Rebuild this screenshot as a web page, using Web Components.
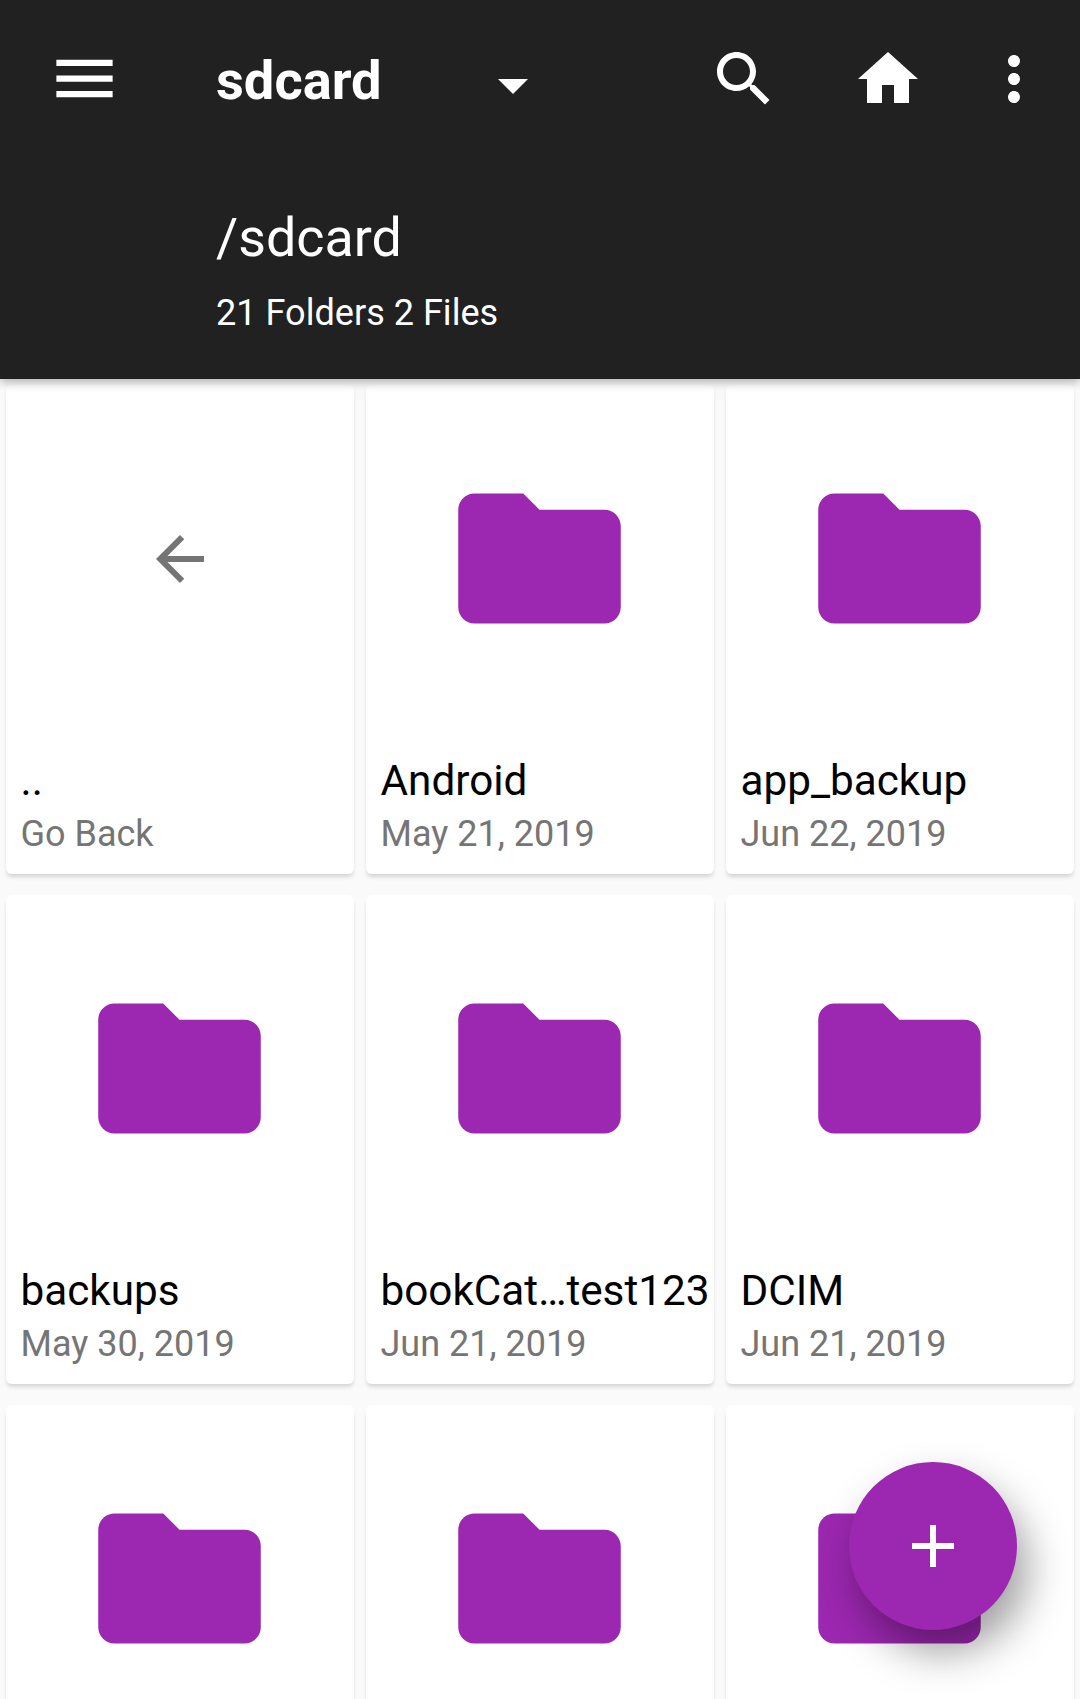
<!DOCTYPE html>
<html>
<head>
<meta charset="utf-8">
<title>sdcard</title>
<style>
  html, body { margin: 0; height: 1699px; overflow: hidden; background: #fafafa; }
  body { position: relative; font-family: Roboto, "Liberation Sans", sans-serif; }
</style>
</head>
<body>
<app-header folder="sdcard" path="/sdcard" summary="21 Folders 2 Files"></app-header>
<file-grid>
  <file-card back name=".." info="Go Back"></file-card>
  <file-card name="Android" info="May 21, 2019"></file-card>
  <file-card name="app_backup" info="Jun 22, 2019"></file-card>
  <file-card name="backups" info="May 30, 2019"></file-card>
  <file-card name="bookCat…test123" info="Jun 21, 2019"></file-card>
  <file-card name="DCIM" info="Jun 21, 2019"></file-card>
  <file-card></file-card>
  <file-card></file-card>
  <file-card></file-card>
</file-grid>
<add-fab></add-fab>

<script>
  const ICONS = {
    menu: 'M3 18h18v-2H3v2zm0-5h18v-2H3v2zm0-7v2h18V6H3z',
    drop: 'M7 10l5 5 5-5z',
    search: 'M15.5 14h-.79l-.28-.27C15.41 12.59 16 11.11 16 9.5 16 5.91 13.09 3 9.5 3S3 5.91 3 9.5 5.91 16 9.5 16c1.61 0 3.09-.59 4.23-1.57l.27.28v.79l5 4.99L20.49 19l-4.99-5zm-6 0C7.01 14 5 11.99 5 9.5S7.01 5 9.5 5 14 7.01 14 9.5 11.99 14 9.5 14z',
    home: 'M10 20v-6h4v6h5v-8h3L12 3 2 12h3v8z',
    more: 'M12 8c1.1 0 2-.9 2-2s-.9-2-2-2-2 .9-2 2 .9 2 2 2zm0 2c-1.1 0-2 .9-2 2s.9 2 2 2 2-.9 2-2-.9-2-2-2zm0 6c-1.1 0-2 .9-2 2s.9 2 2 2 2-.9 2-2-.9-2-2-2z',
    folder: 'M10 4H4c-1.1 0-2 .9-2 2v12c0 1.1.9 2 2 2h16c1.1 0 2-.9 2-2V8c0-1.1-.9-2-2-2h-8l-2-2z',
    back: 'M20 11H7.83l5.59-5.59L12 4l-8 8 8 8 1.41-1.41L7.83 13H20v-2z',
    plus: 'M19 13h-6v6h-2v-6H5v-2h6V5h2v6h6v2z'
  };
  const icon = (name, size, fill) =>
    `<svg width="${size}" height="${size}" viewBox="0 0 24 24" fill="${fill}" style="display:block;flex:none"><path d="${ICONS[name]}"/></svg>`;

  class AppHeader extends HTMLElement {
    constructor(){
      super();
      this.shadow = this.attachShadow({mode: 'open'});
    }
    connectedCallback(){
      this.shadow.innerHTML = `
        <style>
          :host {
            display: block;
            position: relative;
            z-index: 2;
            height: 379px;
            box-sizing: border-box;
            background: #212121;
            color: #fff;
            box-shadow: 0 3px 10px rgba(0,0,0,.3);
            overflow: hidden;
          }
          .bar { display: flex; align-items: flex-start; height: 206px; }
          .menu { margin: 41px 0 0 47px; width: 75px; }
          .folder { margin: 47px 0 0 94px; width: 261px; font-size: 54.25px; font-weight: 700; line-height: 68px; }
          .drop { margin: 49px 0 0 0; }
          .search { margin: 43px 0 0 159px; }
          .home { margin: 43px 0 0 72px; }
          .more { margin: 43px 0 0 54px; }
          .path { margin-left: 216px; font-size: 53.8px; line-height: 64px; }
          .summary { margin: 21px 0 0 216px; font-size: 36.1px; line-height: 44px; }
        </style>
        <div class="bar">
          <div class="menu">${icon('menu', 75, '#fff')}</div>
          <div class="folder">${this.getAttribute('folder')}</div>
          <div class="drop">${icon('drop', 72, '#fff')}</div>
          <div class="search">${icon('search', 72, '#fff')}</div>
          <div class="home">${icon('home', 72, '#fff')}</div>
          <div class="more">${icon('more', 72, '#fff')}</div>
        </div>
        <div class="path">${this.getAttribute('path')}</div>
        <div class="summary">${this.getAttribute('summary')}</div>
      `;
    }
  }

  class FileGrid extends HTMLElement {
    constructor(){
      super();
      this.shadow = this.attachShadow({mode: 'open'});
      this.shadow.innerHTML = `
        <style>
          :host {
            display: grid;
            grid-template-columns: repeat(3, 348px);
            grid-auto-rows: 489.5px;
            column-gap: 12px;
            row-gap: 20.5px;
            padding: 5.5px 6px 0;
            height: 1320px;
            box-sizing: border-box;
            overflow: hidden;
          }
        </style>
        <slot></slot>
      `;
    }
  }

  class FileCard extends HTMLElement {
    constructor(){
      super();
      this.shadow = this.attachShadow({mode: 'open'});
    }
    connectedCallback(){
      const back = this.hasAttribute('back');
      const graphic = back
        ? icon('back', 72, '#757575')
        : icon('folder', 195, '#9c27b0');
      this.shadow.innerHTML = `
        <style>
          :host {
            display: block;
            box-sizing: border-box;
            background: #fff;
            border-radius: 6px;
            box-shadow: 0 4px 4px -1px rgba(0,0,0,.15);
            padding: 0 0 0 14.5px;
          }
          .graphic {
            display: flex;
            align-items: center;
            justify-content: center;
            height: 195px;
            margin: 0 0 0 -15.5px;
            padding-top: 76px;
          }
          .graphic.back { margin-left: -14.5px; padding-top: 77px; height: 194px; }
          .name { margin-top: 99px; font-size: 42.25px; line-height: 52px; color: #000; white-space: nowrap; }
          .info { margin-top: 5px; font-size: 36px; line-height: 44px; color: #757575; white-space: nowrap; }
        </style>
        <div class="graphic ${back ? 'back' : ''}">${graphic}</div>
        <div class="name">${this.getAttribute('name') || ''}</div>
        <div class="info">${this.getAttribute('info') || ''}</div>
      `;
    }
  }

  class AddFab extends HTMLElement {
    constructor(){
      super();
      this.shadow = this.attachShadow({mode: 'open'});
      this.shadow.innerHTML = `
        <style>
          :host {
            position: absolute;
            right: 63px;
            bottom: 69px;
            z-index: 3;
            width: 168px;
            height: 168px;
            border-radius: 50%;
            background: #9c27b0;
            box-shadow: 10px 22px 42px rgba(0,0,0,.38);
            display: flex;
            align-items: center;
            justify-content: center;
          }
        </style>
        ${icon('plus', 72, '#fff')}
      `;
    }
  }

  window.customElements.define('app-header', AppHeader);
  window.customElements.define('file-grid', FileGrid);
  window.customElements.define('file-card', FileCard);
  window.customElements.define('add-fab', AddFab);
</script>
</body>
</html>
